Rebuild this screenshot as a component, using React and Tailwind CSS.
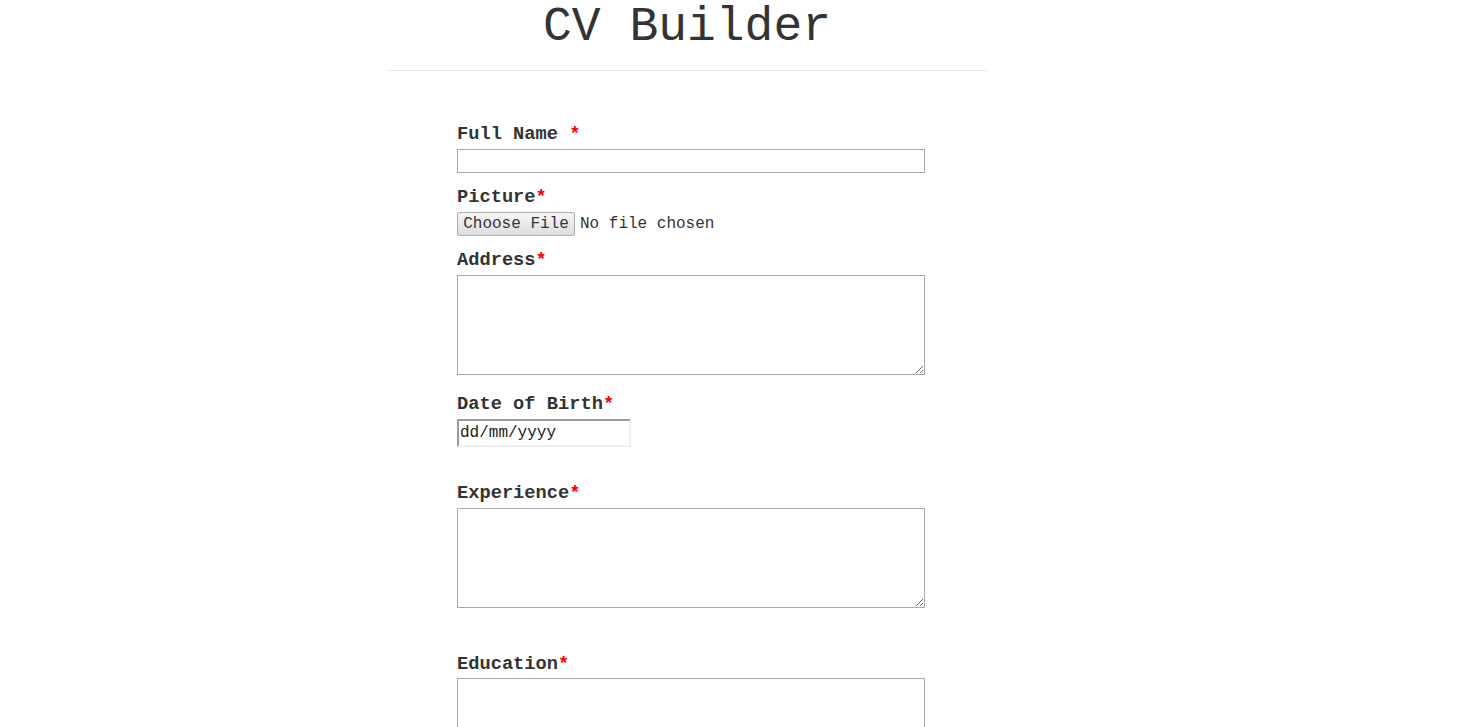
export default function App() {
  const mono = { fontFamily: '"Liberation Mono", "Courier New", monospace' };
  const Label = ({ children, space, mt }) => (
    <div className={`block text-[18.72px] leading-[21px] font-bold text-[#333] ${mt}`}>
      {children}
      {space ? ' ' : ''}
      <span className="text-[#ff0000]">*</span>
    </div>
  );
  return (
    <div className="min-h-[727px] bg-white text-[#333]" style={mono}>
      <div className="ml-[387px] w-[600px]">
        <h1 className="text-center text-[48px] leading-[54px] font-normal text-[#333]">CV Builder</h1>
        <div className="mt-[16px] border-t border-[#e6e6e6]"></div>
        <form className="pl-[70px]">
          <Label space mt="mt-[53px]">Full Name</Label>
          <input type="text" className="mt-[4px] block h-[24px] w-[468px] border border-[#a9a9a9] bg-white outline-none" />

          <Label mt="mt-[14px]">Picture</Label>
          <div className="mt-[4px] flex h-[24px] items-center text-[16px]">
            <div className="flex h-[24px] w-[118px] items-center justify-center rounded-[2px] border border-[#adadad] bg-gradient-to-b from-[#f6f6f6] to-[#dedede] text-[#333]">
              Choose File
            </div>
            <span className="ml-[5px] text-[#333]">No file chosen</span>
          </div>

          <Label mt="mt-[14px]">Address</Label>
          <textarea className="mt-[4px] block h-[100px] w-[468px] border border-[#a9a9a9] bg-white outline-none"></textarea>

          <Label mt="mt-[19px]">Date of Birth</Label>
          <div className="mt-[4px] flex h-[28px] w-[174px] items-center border-2 border-t-[#9a9a9a] border-l-[#9a9a9a] border-r-[#efefef] border-b-[#efefef] pl-[1px] text-[16px] text-[#222]">
            dd/mm/yyyy
          </div>

          <Label mt="mt-[36px]">Experience</Label>
          <textarea className="mt-[4px] block h-[100px] w-[468px] border border-[#a9a9a9] bg-white outline-none"></textarea>

          <Label mt="mt-[46px]">Education</Label>
          <textarea className="mt-[3px] block h-[100px] w-[468px] border border-[#a9a9a9] bg-white outline-none"></textarea>
        </form>
      </div>
    </div>
  );
}
